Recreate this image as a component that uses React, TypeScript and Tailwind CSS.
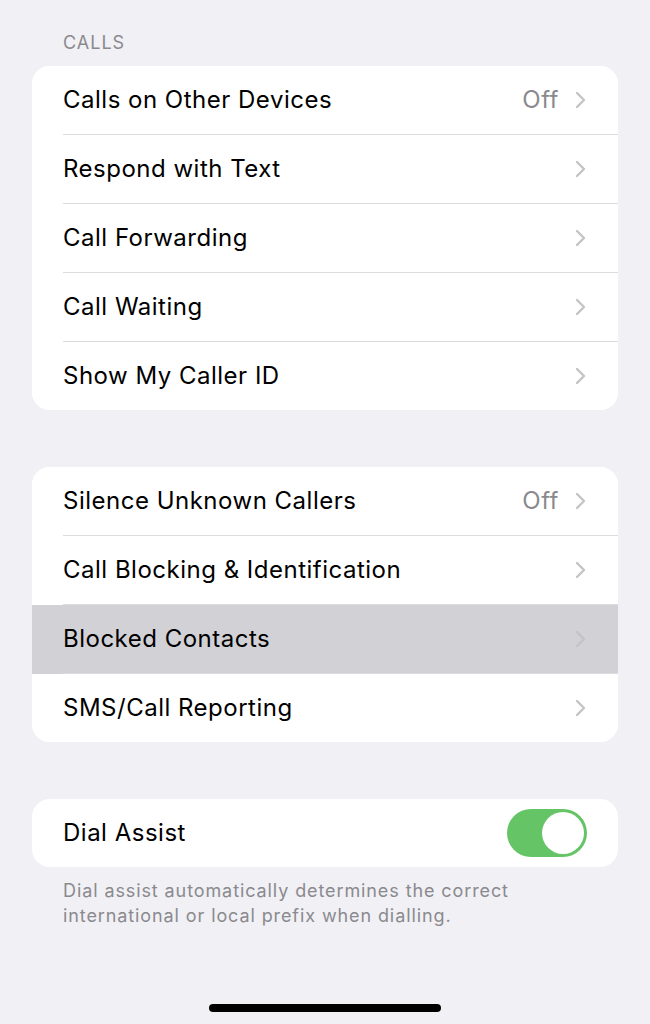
import type { ReactNode } from "react";

type Row = {
  label: string;
  detail?: string;
  pressed?: boolean;
};

const callRows: Row[] = [
  { label: "Calls on Other Devices", detail: "Off" },
  { label: "Respond with Text" },
  { label: "Call Forwarding" },
  { label: "Call Waiting" },
  { label: "Show My Caller ID" },
];

const blockingRows: Row[] = [
  { label: "Silence Unknown Callers", detail: "Off" },
  { label: "Call Blocking & Identification" },
  { label: "Blocked Contacts", pressed: true },
  { label: "SMS/Call Reporting" },
];

function Chevron() {
  return (
    <svg width="11" height="20" viewBox="0 0 11 20" fill="none" className="shrink-0">
      <path
        d="M2 3l7 7-7 7"
        stroke="#c4c4c7"
        strokeWidth="2.4"
        strokeLinecap="round"
        strokeLinejoin="round"
      />
    </svg>
  );
}

function Card({ children }: { children: ReactNode }) {
  return (
    <div className="mx-[32px] overflow-hidden rounded-[18px] bg-white">{children}</div>
  );
}

function ListRow({ row, last }: { row: Row; last: boolean }) {
  return (
    <div className={`pl-[31px] ${row.pressed ? "bg-[#d1d1d6]" : "bg-white"}`}>
      <div
        className={`flex items-center pr-[32px] ${
          last ? "h-[68px]" : "h-[69px] border-b border-[#dcdce0]"
        }`}
      >
        <span className="flex-1 text-[24px] tracking-[0.5px] text-black">{row.label}</span>
        {row.detail && (
          <span className="mr-[16px] text-[24px] tracking-[0.5px] text-[#8a8a8e]">
            {row.detail}
          </span>
        )}
        <Chevron />
      </div>
    </div>
  );
}

function Toggle() {
  return (
    <div className="flex h-[48px] w-[80px] items-center justify-end rounded-full bg-[#65c466] p-[3px]">
      <div className="h-[42px] w-[42px] rounded-full bg-white" />
    </div>
  );
}

export default function App() {
  return (
    <div
      className="flex h-[1024px] w-[650px] flex-col bg-[#f1f0f5]"
      style={{ fontFamily: "Inter, 'Liberation Sans', sans-serif" }}
    >
      <div className="px-[63px] pt-[32px] pb-[12px] text-[18px] leading-[22px] tracking-[1px] text-[#8a8a8e]">
        CALLS
      </div>
      <Card>
        {callRows.map((r, i) => (
          <ListRow key={r.label} row={r} last={i === callRows.length - 1} />
        ))}
      </Card>

      <div className="h-[57px]" />
      <Card>
        {blockingRows.map((r, i) => (
          <ListRow key={r.label} row={r} last={i === blockingRows.length - 1} />
        ))}
      </Card>

      <div className="h-[57px]" />
      <Card>
        <div className="flex h-[68px] items-center justify-between pl-[31px] pr-[31px]">
          <span className="text-[24px] tracking-[0.5px] text-black">Dial Assist</span>
          <Toggle />
        </div>
      </Card>
      <p className="pl-[63px] pr-[100px] pt-[11px] text-[18px] leading-[25px] tracking-[0.9px] text-[#8a8a8e]">
        Dial assist automatically determines the correct international or local prefix when
        dialling.
      </p>

      <div className="mt-auto flex justify-center pb-[12px]">
        <div className="h-[8px] w-[232px] rounded-full bg-black" />
      </div>
    </div>
  );
}
